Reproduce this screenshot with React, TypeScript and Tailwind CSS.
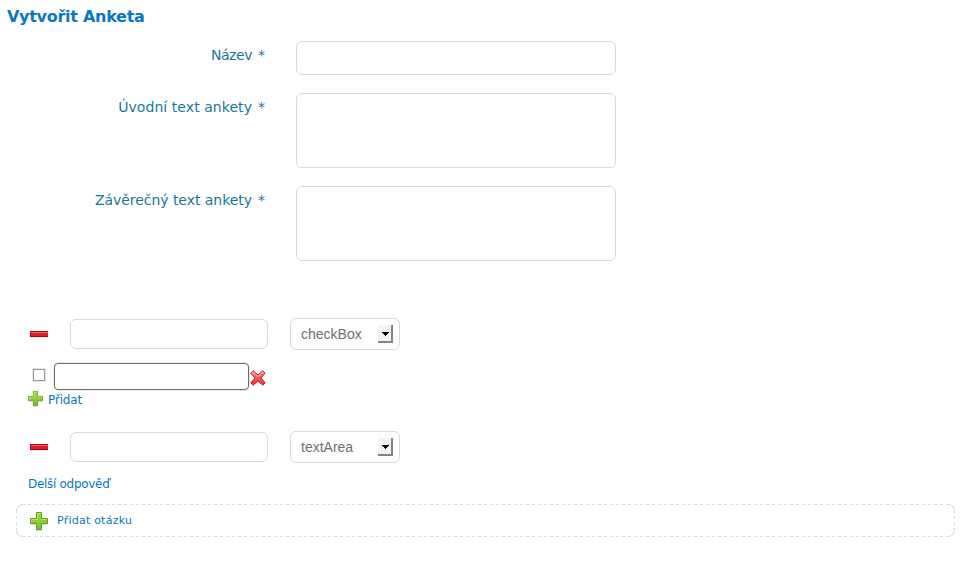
import React from 'react';

const field = 'block resize-none appearance-none rounded-[6px] border border-[#cfe0de] bg-white px-2 outline-none';

function Minus() {
  return (
    <svg width="18" height="7" viewBox="0 0 18 7" shapeRendering="crispEdges">
      <rect y="6" width="18" height="1" fill="#e8e8e8" />
      <rect width="18" height="6" fill="#b80016" />
      <rect x="1" y="1" width="17" height="4" fill="#d9202c" />
      <rect x="1" y="1" width="17" height="1" fill="#ee6561" />
    </svg>
  );
}

function Plus({ size }: { size: number }) {
  return (
    <svg width={size} height={size} viewBox="0 0 18 18" className="overflow-visible">
      <defs>
        <linearGradient id="leaf" x1="0" y1="0" x2="0" y2="1">
          <stop offset="0" stopColor="#a6dc3e" />
          <stop offset="1" stopColor="#72bd2c" />
        </linearGradient>
      </defs>
      <path d="M1 12.5H6M12 12.5H18M6 18.5H12" stroke="#d9dcd6" />
      <path d="M6.5.5h5v6h6v5h-6v6h-5v-6h-6v-5h6z" fill="url(#leaf)" stroke="#5fa022" />
      <path d="M7.5 7.5v-6h3M1.5 10.5v-3h6M11.5 7.5h5" fill="none" stroke="#b9e666" />
    </svg>
  );
}

function Cross() {
  return (
    <svg width="16" height="16" viewBox="0 0 16 16">
      <defs>
        <linearGradient id="ruby" x1="0" y1="0" x2="0" y2="1">
          <stop offset="0" stopColor="#ff9b98" />
          <stop offset=".5" stopColor="#fa5456" />
          <stop offset="1" stopColor="#ff2d32" />
        </linearGradient>
      </defs>
      <path d="M3.2.8 8 5 12.8.8 15.2 3.2 11 8l4.2 4.8-2.4 2.4L8 11l-4.8 4.2L.8 12.8 5 8 .8 3.2z" fill="url(#ruby)" stroke="#b52a30" strokeLinejoin="round" />
      <path d="m2.2 3.2 1-1L8 6.6l4.8-4.4 1 1" fill="none" stroke="#ffc0be" strokeWidth=".8" />
    </svg>
  );
}

function TypeSelect({ value }: { value: string }) {
  return (
    <button className="flex h-8 w-[110px] items-center justify-between rounded-[6px] border border-[#cfe0de] bg-white pr-[6px] pl-[10px] font-['Liberation_Sans',sans-serif] text-[14px] text-[#707070]">
      <span>{value}</span>
      <span className="flex h-[18px] w-[15px] items-center justify-center border-r-2 border-b-2 border-[#858585] bg-[#f4f4f2] pt-[2px] pl-[2px]">
        <svg width="7" height="4" viewBox="0 0 7 4" shapeRendering="crispEdges">
          <path d="M0 0h7v1H6v1H5v1H4v1H3V3H2V2H1V1H0z" fill="#000" />
        </svg>
      </span>
    </button>
  );
}

function Question({ type }: { type: string }) {
  return (
    <div className="flex h-8 items-center pl-[30px]">
      <Minus />
      <input className={`${field} ml-[22px] h-[30px] w-[198px]`} />
      <div className="ml-[22px]"><TypeSelect value={type} /></div>
    </div>
  );
}

function Row({ label, tracking, children }: { label: string; tracking: string; children: React.ReactNode }) {
  return (
    <div className="flex items-start">
      <label className="flex w-[265px] justify-end pt-1 text-[14px] leading-5 whitespace-nowrap text-[#14789c]">
        <span className={tracking}>{label}</span>
        <span className="ml-[6px]">*</span>
      </label>
      <div className="ml-[31px]">{children}</div>
    </div>
  );
}

function Corner({ place, arc }: { place: string; arc: string }) {
  return (
    <span className={`absolute h-2 w-2 bg-white ${place}`}>
      <span className={`block h-2 w-2 border-[#cfe0de] ${arc}`} />
    </span>
  );
}

export default function App() {
  return (
    <main className="h-[569px] w-[969px] overflow-hidden bg-white font-['DejaVu_Sans',sans-serif] text-[#0878c4]">
      <h1 className="h-[41px] pt-[7px] pl-[7px] text-[16px] leading-5 font-bold tracking-[-0.28px]">Vytvořit Anketa</h1>
      <div className="flex flex-col gap-[18px]">
        <Row label="Název" tracking="tracking-[-0.45px]"><input className={`${field} h-[34px] w-80`} /></Row>
        <Row label="Úvodní text ankety" tracking="tracking-[0.06px]"><textarea className={`${field} h-[75px] w-80`} /></Row>
        <Row label="Závěrečný text ankety" tracking="tracking-[-0.04px]"><textarea className={`${field} h-[75px] w-80`} /></Row>
      </div>
      <section className="pt-[57px]">
        <Question type="checkBox" />
        <div className="mt-[13px] flex h-[27px] items-center pl-8">
          <span className="mb-[3px] flex h-[14px] w-[14px] items-center justify-center bg-[#e6e6e6]">
            <input type="checkbox" className="h-3 w-3 appearance-none border border-[#999] bg-white" />
          </span>
          <input className="ml-2 h-[27px] w-[195px] rounded-[4px] border border-[#6c6c6c] bg-white px-2 shadow-[0_0_0_1px_#ececec] outline-none" />
          <span className="mt-[2px] ml-[1px]"><Cross /></span>
        </div>
        <a className="flex h-[18px] items-center pl-7 text-[12px] tracking-[-0.15px]">
          <span className="mb-[2px]"><Plus size={15} /></span>
          <span className="mt-[2px] ml-[5px]">Přidat</span>
        </a>
      </section>
      <section className="pt-[23px]">
        <Question type="textArea" />
        <p className="mt-[13px] h-7 pl-7 text-[12px] leading-4 tracking-[-0.3px]">Delší odpověď</p>
      </section>
      <a className="relative ml-4 flex h-[33px] w-[939px] items-center bg-[repeating-linear-gradient(90deg,#cfe0de_0_3px,transparent_3px_6px),repeating-linear-gradient(90deg,#cfe0de_0_3px,transparent_3px_6px),repeating-linear-gradient(180deg,#cfe0de_0_3px,transparent_3px_6px),repeating-linear-gradient(180deg,#cfe0de_0_3px,transparent_3px_6px)] bg-[length:100%_1px,100%_1px,1px_100%,1px_100%] bg-[position:left_top,left_bottom,left_top,right_top] bg-no-repeat pl-[14px] text-[11px] tracking-[0.23px]">
        <Corner place="top-0 left-0" arc="rounded-tl-[7px] border-t border-l" />
        <Corner place="top-0 right-0" arc="rounded-tr-[7px] border-t border-r" />
        <Corner place="bottom-0 left-0" arc="rounded-bl-[7px] border-b border-l" />
        <Corner place="right-0 bottom-0" arc="rounded-br-[7px] border-r border-b" />
        <Plus size={18} /><span className="mt-px ml-[9px]">Přidat otázku</span>
      </a>
    </main>
  );
}
